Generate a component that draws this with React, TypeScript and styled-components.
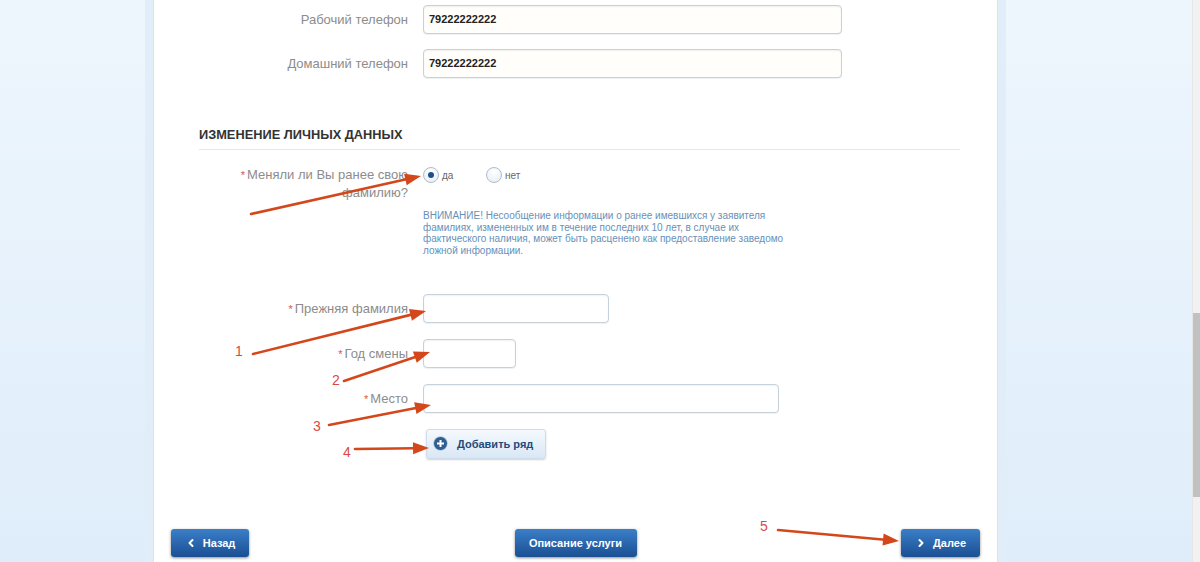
import styled, { createGlobalStyle } from "styled-components";
import React from "react";
import { ChevronLeft, ChevronRight } from "lucide-react";

const GlobalStyle = createGlobalStyle`
  html, body {
    margin: 0;
    padding: 0;
    height: 562px;
    overflow: hidden;
  }
  body {
    font-family: "Liberation Sans", Arial, sans-serif;
    background: linear-gradient(#eef6fd, #dfedfa);
  }
`;

const Page = styled.div`
  display: flex;
  width: 1200px;
  height: 562px;
`;
const Main = styled.div`
  position: relative;
  flex: 1;
  padding-left: 145px;
`;
const Scrollbar = styled.div`
  width: 8px;
  background: #f1f1f1;
  border-left: 1px solid #e6e6e6;
  box-sizing: border-box;
`;
const Thumb = styled.div`
  margin-top: 313px;
  height: 184px;
  background: #c1c1c1;
`;
const Panel = styled.div`
  width: 845px;
  height: 562px;
  background: #fff;
  border-left: 8px solid #e1eef9;
  border-right: 8px solid #e1eef9;
  box-shadow: inset 1px 0 0 #d3e5f3, inset -1px 0 0 #d3e5f3;
  display: flex;
  flex-direction: column;
`;
const Content = styled.div`
  padding: 5px 38px 0 46px;
`;
const FormRow = styled.div<{ $top?: number }>`
  display: grid;
  grid-template-columns: 209px auto;
  column-gap: 15px;
  align-items: start;
  margin-top: ${(p) => p.$top ?? 15}px;
`;
const Label = styled.label`
  text-align: right;
  font-size: 13px;
  line-height: 29px;
  color: #8c8c8c;
`;
const QuestionLabel = styled(Label)`
  line-height: 18px;
`;
const Star = styled.span`
  color: #e2504c;
  margin-right: 2px;
  font-size: 11px;
`;
const Input = styled.div<{ $w: number; $filled?: boolean }>`
  width: ${(p) => p.$w}px;
  height: 29px;
  box-sizing: border-box;
  border: 1px solid #c6d1da;
  border-radius: 4px;
  box-shadow: inset 0 1px 2px rgba(0, 0, 0, 0.06), 0 1px 0 #eef2f5;
  background: ${(p) => (p.$filled ? "#fffefa" : "#fff")};
  padding-left: 5px;
  font-size: 11px;
  font-weight: bold;
  color: #222;
  line-height: 27px;
`;
const Section = styled.div`
  margin-top: 49px;
  padding-bottom: 7px;
  border-bottom: 1px solid #e4e8ec;
`;
const Heading = styled.h3`
  margin: 0;
  font-size: 12.8px;
  line-height: 15px;
  font-weight: bold;
  color: #333;
`;
const Radios = styled.div`
  display: flex;
  align-items: center;
  height: 18px;
`;
const RadioOption = styled.div`
  display: flex;
  align-items: center;
  width: 63px;
  font-size: 10px;
  color: #666;
`;
const RadioDot = styled.span<{ $checked?: boolean }>`
  width: 16px;
  height: 16px;
  box-sizing: border-box;
  border-radius: 50%;
  border: 1px solid #aebccb;
  background: radial-gradient(circle at 50% 30%, #ffffff, #e5edf5);
  margin-right: 3px;
  display: flex;
  align-items: center;
  justify-content: center;
  &::after {
    content: "";
    display: ${(p) => (p.$checked ? "block" : "none")};
    width: 6px;
    height: 6px;
    border-radius: 50%;
    background: #1d4f8b;
  }
`;
const Warning = styled.p`
  margin: 26px 0 0;
  width: 366px;
  font-size: 10px;
  line-height: 11.7px;
  color: #6790b9;
`;
const Fields = styled.div`
  margin-top: 37px;
`;
const AddButton = styled.div`
  margin: 15px 0 0 227px;
  width: 120px;
  height: 30px;
  box-sizing: border-box;
  display: flex;
  align-items: center;
  gap: 9px;
  padding-left: 6px;
  border: 1px solid #cfdceb;
  border-radius: 3px;
  background: linear-gradient(#f5f9fd, #d9e7f5);
  box-shadow: 0 1px 2px rgba(0, 0, 0, 0.18);
  font-size: 11px;
  font-weight: bold;
  color: #1f4b7c;
`;
const Footer = styled.div`
  margin-top: 70px;
  padding: 0 18px;
  display: grid;
  grid-template-columns: 1fr auto 1fr;
  align-items: center;
`;
const NavButton = styled.div<{ $w: number; $align?: string }>`
  justify-self: ${(p) => p.$align ?? "center"};
  width: ${(p) => p.$w}px;
  height: 28px;
  box-sizing: border-box;
  display: flex;
  align-items: center;
  justify-content: center;
  gap: 6px;
  border-radius: 3px;
  background: linear-gradient(#3a7fc8, #1b4f93);
  box-shadow: 0 1px 3px rgba(0, 0, 0, 0.45);
  color: #fff;
  font-size: 11px;
  font-weight: bold;
`;
const Overlay = styled.svg`
  position: absolute;
  top: 0;
  left: 0;
  width: 1192px;
  height: 562px;
  pointer-events: none;
`;
const Num = styled.text`
  font-family: "Liberation Sans", Arial, sans-serif;
  font-size: 14px;
  fill: #d64b46;
`;

const PlusIcon = () => (
  <svg width="15" height="15" viewBox="0 0 15 15">
    <circle cx="7.5" cy="7.5" r="7" fill="#2f5f91" />
    <circle cx="7.5" cy="7.5" r="7" fill="none" stroke="#d5e2ef" strokeWidth="0.8" />
    <path d="M7.5 4v7M4 7.5h7" stroke="#fff" strokeWidth="2" />
  </svg>
);

type ArrowProps = { x1: number; y1: number; x2: number; y2: number };
const Arrow = ({ x1, y1, x2, y2 }: ArrowProps) => {
  const dx = x2 - x1;
  const dy = y2 - y1;
  const len = Math.hypot(dx, dy);
  const ux = dx / len;
  const uy = dy / len;
  const bx = x2 - ux * 16;
  const by = y2 - uy * 16;
  const px = -uy * 6;
  const py = ux * 6;
  return (
    <g fill="#d4471b" stroke="#d4471b">
      <line x1={x1} y1={y1} x2={bx + ux * 2} y2={by + uy * 2} strokeWidth="2.6" strokeLinecap="round" />
      <polygon points={`${x2},${y2} ${bx + px},${by + py} ${bx - px},${by - py}`} stroke="none" />
    </g>
  );
};

const fields = [
  { label: "Прежняя фамилия", w: 186 },
  { label: "Год смены", w: 93 },
  { label: "Место", w: 356 },
];

function App() {
  return (
    <Page>
      <GlobalStyle />
      <Main>
        <Panel>
          <Content>
            <FormRow $top={0}>
              <Label>Рабочий телефон</Label>
              <Input $w={419} $filled>
                79222222222
              </Input>
            </FormRow>
            <FormRow>
              <Label>Домашний телефон</Label>
              <Input $w={419} $filled>
                79222222222
              </Input>
            </FormRow>
            <Section>
              <Heading>ИЗМЕНЕНИЕ ЛИЧНЫХ ДАННЫХ</Heading>
            </Section>
            <FormRow $top={16}>
              <QuestionLabel>
                <Star>*</Star>Меняли ли Вы ранее свою
                <br />
                фамилию?
              </QuestionLabel>
              <div>
                <Radios>
                  <RadioOption>
                    <RadioDot $checked />
                    да
                  </RadioOption>
                  <RadioOption>
                    <RadioDot />
                    нет
                  </RadioOption>
                </Radios>
                <Warning>
                  ВНИМАНИЕ! Несообщение информации о ранее имевшихся у заявителя фамилиях, измененных им в течение
                  последних 10 лет, в случае их фактического наличия, может быть расценено как предоставление заведомо
                  ложной информации.
                </Warning>
              </div>
            </FormRow>
            <Fields>
              {fields.map((f, i) => (
                <FormRow key={f.label} $top={i === 0 ? 0 : 15}>
                  <Label>
                    <Star>*</Star>
                    {f.label}
                  </Label>
                  <Input $w={f.w} />
                </FormRow>
              ))}
            </Fields>
            <AddButton>
              <PlusIcon />
              Добавить ряд
            </AddButton>
          </Content>
          <Footer>
            <NavButton $w={78} $align="start">
              <ChevronLeft size={12} strokeWidth={4} />
              Назад
            </NavButton>
            <NavButton $w={122}>Описание услуги</NavButton>
            <NavButton $w={79} $align="end">
              <ChevronRight size={12} strokeWidth={4} />
              Далее
            </NavButton>
          </Footer>
        </Panel>
        <Overlay>
          <Arrow x1={251} y1={214} x2={421} y2={176} />
          <Arrow x1={253} y1={354} x2={426} y2={311} />
          <Arrow x1={344} y1={381} x2={430} y2={352} />
          <Arrow x1={329} y1={425} x2={431} y2={405} />
          <Arrow x1={355} y1={449} x2={429} y2={448} />
          <Arrow x1={778} y1={530} x2={899} y2={541} />
          <Num x={235} y={356}>1</Num>
          <Num x={332} y={385}>2</Num>
          <Num x={313} y={431}>3</Num>
          <Num x={343} y={457}>4</Num>
          <Num x={760} y={531}>5</Num>
        </Overlay>
      </Main>
      <Scrollbar>
        <Thumb />
      </Scrollbar>
    </Page>
  );
}

export default App;
